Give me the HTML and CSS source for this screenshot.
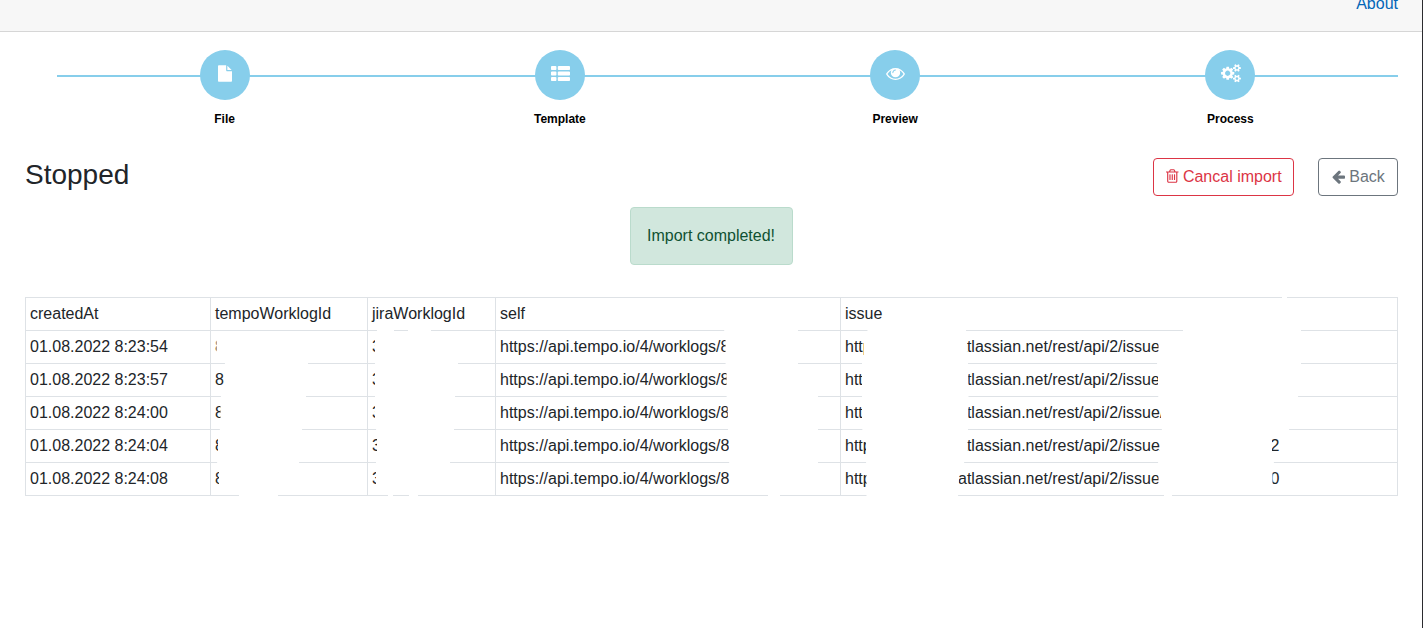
FILE: index.html
```html
<!DOCTYPE html>
<html lang="en">
<head>
<meta charset="utf-8">
<title>Import</title>
<link rel="stylesheet" href="styles.css">
</head>
<body>
<div class="page">
  <header class="topbar"><a class="about">About</a></header>
  <nav class="steps">
    <div class="step">
      <span class="circle"><svg class="ic-file" viewBox="128 0 1536 1792"><path d="M1152 512v-472q22 14 36 28l408 408q14 14 28 36h-472zm-128 32q0 40 28 68t68 28h544v1056q0 40-28 68t-68 28h-1344q-40 0-68-28t-28-68v-1600q0-40 28-68t68-28h800v544z"/></svg></span>
      <span class="label">File</span>
    </div>
    <div class="step">
      <span class="circle"><svg class="ic-list" viewBox="0 128 1792 1408"><path d="M512 1248v192q0 40-28 68t-68 28h-320q-40 0-68-28t-28-68v-192q0-40 28-68t68-28h320q40 0 68 28t28 68zm0-512v192q0 40-28 68t-68 28h-320q-40 0-68-28t-28-68v-192q0-40 28-68t68-28h320q40 0 68 28t28 68zm1280 512v192q0 40-28 68t-68 28h-960q-40 0-68-28t-28-68v-192q0-40 28-68t68-28h960q40 0 68 28t28 68zm-1280-1024v192q0 40-28 68t-68 28h-320q-40 0-68-28t-28-68v-192q0-40 28-68t68-28h320q40 0 68 28t28 68zm1280 512v192q0 40-28 68t-68 28h-960q-40 0-68-28t-28-68v-192q0-40 28-68t68-28h960q40 0 68 28t28 68zm0-512v192q0 40-28 68t-68 28h-960q-40 0-68-28t-28-68v-192q0-40 28-68t68-28h960q40 0 68 28t28 68z"/></svg></span>
      <span class="label">Template</span>
    </div>
    <div class="step">
      <span class="circle"><svg class="ic-eye" viewBox="0 384 1792 1152"><path d="M1664 960q-152-236-381-353 61 104 61 225 0 185-131.500 316.500t-316.500 131.500-316.500-131.500-131.500-316.500q0-121 61-225-229 117-381 353 133 205 333.500 326.500t434.500 121.500 434.500-121.500 333.500-326.500zm-720-384q0-20-14-34t-34-14q-125 0-214.500 89.500t-89.500 214.500q0 20 14 34t34 14 34-14 14-34q0-86 61-147t147-61q20 0 34-14t14-34zm848 384q0 34-20 69-140 230-376.500 368.500t-499.500 138.500-499.500-139-376.500-368q-20-35-20-69t20-69q140-229 376.500-368t499.500-139 499.500 139 376.500 368q20 35 20 69z"/></svg></span>
      <span class="label">Preview</span>
    </div>
    <div class="step">
      <span class="circle"><svg class="ic-cogs" viewBox="0 0 1920 1792"><path d="M896 896q0-106-75-181t-181-75-181 75-75 181 75 181 181 75 181-75 75-181zm768 512q0-52-38-90t-90-38-90 38-38 90q0 53 37.500 90.500t90.500 37.500 90.500-37.500 37.500-90.500zm0-1024q0-52-38-90t-90-38-90 38-38 90q0 53 37.500 90.500t90.500 37.500 90.500-37.500 37.500-90.500zm-384 421v185q0 10-7 19.500t-16 10.500l-155 24q-11 35-32 76 34 48 90 115 7 11 7 20 0 12-7 19-23 30-82.500 89.500t-78.500 59.500q-11 0-21-7l-115-90q-37 19-77 31-11 108-23 155-7 24-30 24h-186q-11 0-20-7.500t-10-17.500l-23-153q-34-10-75-31l-118 89q-7 7-20 7-11 0-21-8-144-133-144-160 0-9 7-19 10-14 41-53t47-61q-23-44-35-82l-152-24q-10-1-17-9.500t-7-19.500v-185q0-10 7-19.500t16-10.500l155-24q11-35 32-76-34-48-90-115-7-11-7-20 0-12 7-20 22-30 82-89t79-59q11 0 21 7l115 90q34-18 77-32 11-108 23-154 7-24 30-24h186q11 0 20 7.500t10 17.500l23 153q34 10 75 31l118-89q8-7 20-7 11 0 21 8 144 133 144 160 0 8-7 19-12 16-42 54t-45 60q23 48 34 82l152 23q10 2 17 10.500t7 19.500zm640 533v140q0 16-149 31-12 27-30 52 51 113 51 138 0 4-4 7-122 71-124 71-8 0-46-47t-52-68q-20 2-30 2t-30-2q-14 21-52 68t-46 47q-2 0-124-71-4-3-4-7 0-25 51-138-18-25-30-52-149-15-149-31v-140q0-16 149-31 13-29 30-52-51-113-51-138 0-4 4-7 4-2 35-20t59-34 30-16q8 0 46 46.500t52 67.500q20-2 30-2t30 2q51-71 92-112l6-2q4 0 124 70 4 3 4 7 0 25-51 138 17 23 30 52 149 15 149 31zm0-1024v140q0 16-149 31-12 27-30 52 51 113 51 138 0 4-4 7-122 71-124 71-8 0-46-47t-52-68q-20 2-30 2t-30-2q-14 21-52 68t-46 47q-2 0-124-71-4-3-4-7 0-25 51-138-18-25-30-52-149-15-149-31v-140q0-16 149-31 13-29 30-52-51-113-51-138 0-4 4-7 4-2 35-20t59-34 30-16q8 0 46 46.500t52 67.500q20-2 30-2t30 2q51-71 92-112l6-2q4 0 124 70 4 3 4 7 0 25-51 138 17 23 30 52 149 15 149 31z"/></svg></span>
      <span class="label">Process</span>
    </div>
  </nav>
  <section class="heading">
    <h3 class="title">Stopped</h3>
    <div class="actions">
      <button class="btn btn-danger"><svg class="ic-trash" viewBox="192 128 1408 1536"><path d="M704 736v576q0 14-9 23t-23 9h-64q-14 0-23-9t-9-23v-576q0-14 9-23t23-9h64q14 0 23 9t9 23zm256 0v576q0 14-9 23t-23 9h-64q-14 0-23-9t-9-23v-576q0-14 9-23t23-9h64q14 0 23 9t9 23zm256 0v576q0 14-9 23t-23 9h-64q-14 0-23-9t-9-23v-576q0-14 9-23t23-9h64q14 0 23 9t9 23zm128 724v-948h-896v948q0 22 7 40.500t14.500 27 10.500 8.500h832q3 0 10.500-8.500t14.500-27 7-40.500zm-672-1076h448l-48-117q-7-9-17-11h-317q-10 2-17 11zm928 32v64q0 14-9 23t-23 9h-96v948q0 83-47 143.500t-113 60.500h-832q-66 0-113-58.500t-47-141.500v-952h-96q-14 0-23-9t-9-23v-64q0-14 9-23t23-9h309l70-167q15-37 54-63t79-26h320q40 0 79 26t54 63l70 167h309q14 0 23 9t9 23z"/></svg>Cancal import</button>
      <button class="btn btn-back"><svg class="ic-arrow" viewBox="128 180 1536 1520"><path d="M1664 896v128q0 53-32.500 90.500t-84.500 37.500h-704l293 294q38 36 38 90t-38 90l-75 76q-37 37-90 37-52 0-91-37l-651-652q-37-37-37-90 0-52 37-91l651-650q38-38 91-38 52 0 90 38l75 74q38 38 38 91t-38 91l-293 293h704q52 0 84.500 37.500t32.500 90.500z"/></svg>Back</button>
    </div>
  </section>
  <div class="alert">Import completed!</div>
  <div class="table-wrap">
    <table class="grid">
      <colgroup><col class="c1"><col class="c2"><col class="c3"><col class="c4"><col class="c5"></colgroup>
      <tr><td>createdAt</td><td>tempoWorklogId</td><td>jiraWorklogId</td><td>self</td><td>issue</td></tr>
      <tr><td>01.08.2022 8:23:54</td><td>8</td><td>3</td><td>https://api.tempo.io/4/worklogs/8</td><td><div class="url"><span class="scheme">http</span><span class="host">atlassian.net/rest/api/2/issue</span></div></td></tr>
      <tr><td>01.08.2022 8:23:57</td><td>8</td><td>3</td><td>https://api.tempo.io/4/worklogs/8</td><td><div class="url"><span class="scheme">http</span><span class="host">atlassian.net/rest/api/2/issue</span></div></td></tr>
      <tr><td>01.08.2022 8:24:00</td><td>8</td><td>3</td><td>https://api.tempo.io/4/worklogs/8</td><td><div class="url"><span class="scheme">http</span><span class="host">atlassian.net/rest/api/2/issue/</span></div></td></tr>
      <tr><td>01.08.2022 8:24:04</td><td>8</td><td>3</td><td>https://api.tempo.io/4/worklogs/8</td><td><div class="url"><span class="scheme">http</span><span class="host">atlassian.net/rest/api/2/issue/</span><span>2</span></div></td></tr>
      <tr><td>01.08.2022 8:24:08</td><td>8</td><td>3</td><td>https://api.tempo.io/4/worklogs/8</td><td><div class="url"><span class="scheme">http</span><span class="host">atlassian.net/rest/api/2/issue</span><span>0</span></div></td></tr>
    </table>
    <!-- white masks hiding the private parts of ids and urls -->
    <svg class="mask" viewBox="25 297 1373 199">
      <path d="M216.500 335H308V364H308L306 397L302 430L299 463L278 490V497H239V490H219V470L217 462L218 455V435L220 429L220.500 420V400L221 396L224 388V370L225 363V356H216.500Z"/>
      <path d="M377 329H394V332H408V329H431V332L458 340V364L455 397L454 430L450 463L440 490H418V497H409V492H393V497H388V490H376V470L376 462L377 455V436L376 429L375 420V340L377 336Z"/>
      <path d="M724 329H798V364L818 392V463L800 490L780 494V497H768V492H730V465L729 462V440L728 429L727.500 400L726.500 396V370L725.500 363V340Z"/>
      <path d="M868 329H966L967 352L968 363L968.500 396L968 429L967 452L964 463L959.500 470L958 497H866.500V465L866 462V435L862 429V363L864 356V340Z"/>
      <path d="M1282 296H1287V300L1301 325V364L1298 397L1289 430L1272 438V455L1274 463L1272.500 470V488L1172 493V497H1164V492L1158.500 489V465L1158 462L1160 455V436L1162 429L1161 420V402L1158 396V370L1157 363L1158.500 356V340L1183 332V329L1282 300Z"/>
    </svg>
  </div>
</div>
</body>
</html>
```

FILE: styles.css
```css
* { box-sizing: border-box; }
body {
  margin: 0;
  background: #fff;
  color: #212529;
  font: 16px/24px "Liberation Sans", Arial, sans-serif;
}
.page { height: 628px; border-right: 1px solid #2b2b2f; overflow: hidden; }
.topbar {
  height: 32px;
  background: #f7f7f7;
  border-bottom: 1px solid #d6d6d6;
  display: flex;
  justify-content: flex-end;
  padding-right: 24px;
}
.about { color: #0366b8; margin-top: -8px; height: 24px; }
.steps {
  display: grid;
  grid-template-columns: repeat(4, 1fr);
  margin: 18px 24px 0 57px;
  height: 76px;
  background: linear-gradient(#87ceeb, #87ceeb) 0 25px / 100% 2px no-repeat;
}
.step { display: flex; flex-direction: column; align-items: center; }
.circle {
  width: 50px;
  height: 50px;
  border-radius: 50%;
  background: #87ceeb;
  display: flex;
  align-items: center;
  justify-content: center;
  padding-bottom: 3px;
}
svg { display: block; fill: currentColor; }
.circle svg { color: #fff; }
.ic-file { width: 14px; height: 17px; }
.ic-list { width: 19px; height: 15px; margin: 0 0 1px 1px; }
.ic-eye { width: 19px; height: 12px; margin-bottom: -1px; }
.ic-cogs { width: 20px; height: 18.500px; margin-left: 1px; }
.label { font-size: 12px; font-weight: bold; line-height: 18px; margin-top: 10px; color: #000; }
.heading {
  display: flex;
  justify-content: space-between;
  margin: 32px 24px 0 25px;
  height: 38px;
}
.title { margin: 0; font-size: 28px; font-weight: normal; line-height: 34px; }
.actions { display: flex; gap: 24px; }
.btn {
  height: 38px;
  display: flex;
  align-items: center;
  justify-content: center;
  gap: 4px;
  border: 1px solid;
  border-radius: 4px;
  background: #fff;
  padding: 0 0 1px 1px;
  font: inherit;
}
.btn-danger { width: 141px; color: #dc3545; }
.btn-back { width: 80px; color: #6c757d; }
.ic-trash { width: 12.500px; height: 14px; margin-bottom: 1px; }
.ic-arrow { width: 13px; height: 14px; }
.alert {
  width: 163px;
  height: 58px;
  margin: 11px auto 0 630px;
  padding: 16px;
  border: 1px solid #badbcc;
  border-radius: 4px;
  background: #d1e7dd;
  color: #0f5132;
  white-space: nowrap;
}
.table-wrap { position: relative; width: 1373px; margin: 32px 0 0 25px; }
.grid { width: 1373px; table-layout: fixed; border-collapse: collapse; }
.c1 { width: 185px; }
.c2 { width: 157px; }
.c3 { width: 128px; }
.c4 { width: 345px; }
.c5 { width: 557px; }
.grid td { height: 33px; padding: 4px; border: 1px solid #dee2e6; white-space: nowrap; }
.url { display: flex; }
.scheme { width: 113px; }
.host { width: 312.500px; }
.mask { position: absolute; left: 0; top: 0; width: 1373px; height: 199px; fill: #fff; overflow: visible; }
```
